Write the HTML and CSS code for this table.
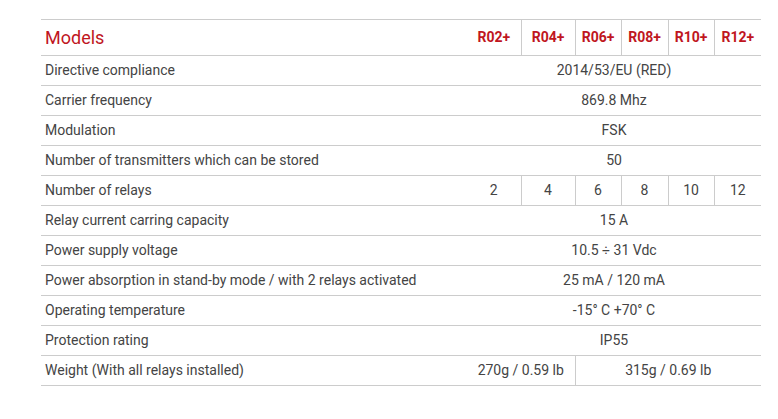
FILE: index.html
```html
<!DOCTYPE html>
<html>
<head>
<meta charset="utf-8">
<link rel="stylesheet" href="styles.css">
</head>
<body>
<div class="wrap">
<table class="spec">
  <colgroup>
    <col class="c-label">
    <col class="c54"><col class="c54"><col class="c46"><col class="c47"><col class="c46"><col class="c47">
  </colgroup>
  <thead>
    <tr class="head">
      <th class="title">Models</th>
      <th class="model">R02+</th>
      <th class="model sep">R04+</th>
      <th class="model sep">R06+</th>
      <th class="model sep">R08+</th>
      <th class="model sep">R10+</th>
      <th class="model sep">R12+</th>
    </tr>
  </thead>
  <tbody>
    <tr><td class="label">Directive compliance</td><td class="val" colspan="6">2014/53/EU (RED)</td></tr>
    <tr><td class="label">Carrier frequency</td><td class="val" colspan="6">869.8 Mhz</td></tr>
    <tr><td class="label">Modulation</td><td class="val" colspan="6">FSK</td></tr>
    <tr><td class="label">Number of transmitters which can be stored</td><td class="val" colspan="6">50</td></tr>
    <tr><td class="label">Number of relays</td><td class="val">2</td><td class="val sep">4</td><td class="val sep">6</td><td class="val sep">8</td><td class="val sep">10</td><td class="val sep">12</td></tr>
    <tr><td class="label">Relay current carring capacity</td><td class="val" colspan="6">15 A</td></tr>
    <tr><td class="label">Power supply voltage</td><td class="val" colspan="6">10.5 ÷ 31 Vdc</td></tr>
    <tr><td class="label">Power absorption in stand-by mode / with 2 relays activated</td><td class="val" colspan="6">25 mA / 120 mA</td></tr>
    <tr><td class="label">Operating temperature</td><td class="val" colspan="6">-15° C +70° C</td></tr>
    <tr><td class="label">Protection rating</td><td class="val" colspan="6">IP55</td></tr>
    <tr><td class="label">Weight (With all relays installed)</td><td class="val" colspan="2">270g / 0.59 lb</td><td class="val sep" colspan="4">315g / 0.69 lb</td></tr>
  </tbody>
</table>
</div>
</body>
</html>
```
FILE: styles.css
```css
html, body {
  margin: 0;
  padding: 0;
  background: #ffffff;
}
.wrap {
  padding: 19px 17px 0 41px;
}
.spec {
  width: 720px;
  border-collapse: collapse;
  table-layout: fixed;
  font-family: Roboto, "Liberation Sans", sans-serif;
  font-size: 14px;
  color: #444444;
  border-top: 1px solid #cccccc;
}
.c-label { width: 426px; }
.c54 { width: 54px; }
.c46 { width: 46px; }
.c47 { width: 47px; }
.spec th, .spec td {
  border-bottom: 1px solid #cccccc;
  padding: 0 0 1px 0;
  box-sizing: border-box;
}
.head th {
  height: 36px;
}
.spec tbody td {
  height: 30px;
}
.title {
  text-align: left;
  font-weight: 400;
  font-size: 18px;
  color: #c0161e;
  padding-left: 4px !important;
}
.model {
  font-weight: 700;
  font-size: 14px;
  color: #c0161e;
  text-align: center;
}
.label {
  text-align: left;
  padding-left: 4px !important;
}
.val {
  text-align: center;
}
.sep {
  border-left: 1px solid #cccccc;
}
```
